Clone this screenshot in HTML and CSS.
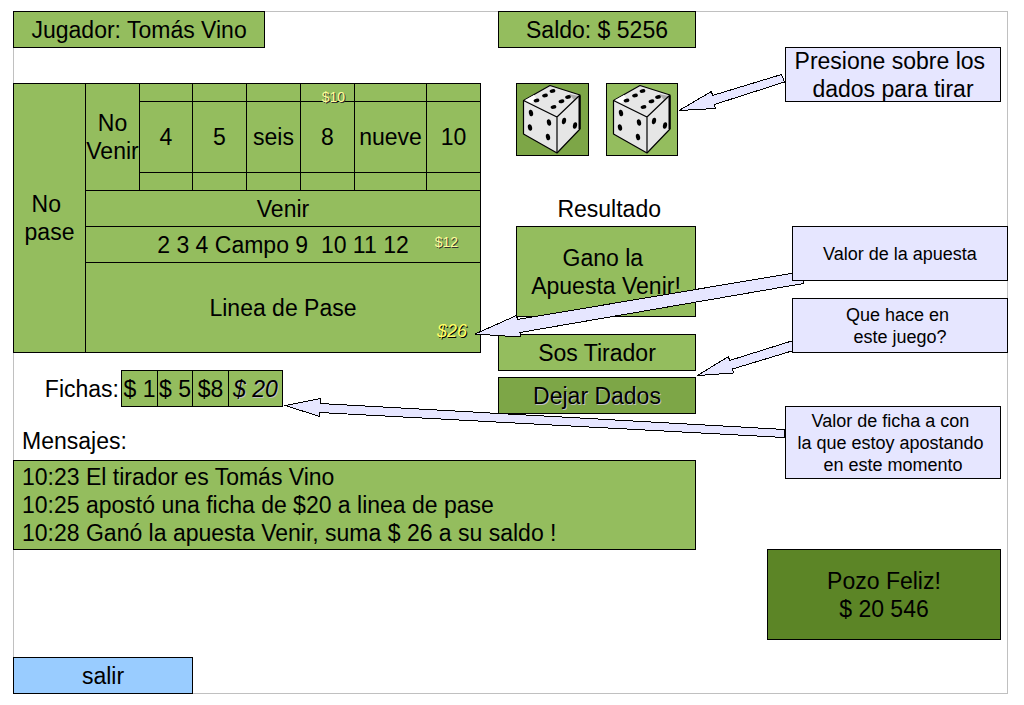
FILE: index.html
```html
<!DOCTYPE html>
<html lang="es">
<head>
<meta charset="utf-8">
<meta name="viewport" content="width=device-width, initial-scale=1">
<title>Mesa de dados</title>
<link rel="stylesheet" href="styles.css">
</head>
<body>
<svg class="defs" aria-hidden="true">
  <symbol id="die" viewBox="0 0 70 71">
    <path fill="#e6e6e6" stroke="#000" stroke-width="1.2" stroke-linejoin="round" d="M33 1.5 6.500 16.500V50L40 69 63 45V11Z"/>
    <path fill="#fff" d="M8 16 17 11 20 16 14 19Z"/>
    <path fill="#aaa" d="M62 12 52 10 57 16Z"/>
    <path fill="none" stroke="#000" stroke-width="1.2" d="M6.500 16.500 40 33 63 11M40 33V69"/>
    <path fill="none" stroke="#000" stroke-width="2" d="M62.500 12V45"/>
    <g>
      <ellipse cx="35.500" cy="7" rx="2.900" ry="1.900" transform="rotate(-12 35.500 7)"/>
      <ellipse cx="28" cy="11.500" rx="2.900" ry="1.900" transform="rotate(-12 28 11.500)"/>
      <ellipse cx="19.500" cy="16.500" rx="2.900" ry="1.900" transform="rotate(-12 19.500 16.500)"/>
      <ellipse cx="51" cy="13" rx="2.900" ry="1.900" transform="rotate(-12 51 13)"/>
      <ellipse cx="44.500" cy="17.300" rx="2.900" ry="1.900" transform="rotate(-12 44.500 17.300)"/>
      <ellipse cx="36.500" cy="23" rx="2.900" ry="1.900" transform="rotate(-12 36.500 23)"/>
    </g>
    <g>
      <ellipse cx="14" cy="29" rx="2.100" ry="3.200" transform="rotate(-12 14 29)"/>
      <ellipse cx="13" cy="43.500" rx="2.100" ry="3.200" transform="rotate(-12 13 43.500)"/>
      <ellipse cx="32" cy="38.500" rx="2.100" ry="3.200" transform="rotate(-12 32 38.500)"/>
      <ellipse cx="31" cy="53" rx="2.100" ry="3.200" transform="rotate(-12 31 53)"/>
      <ellipse cx="47" cy="37" rx="2.100" ry="3.200" transform="rotate(10 47 37)"/>
      <ellipse cx="58" cy="41.500" rx="2.100" ry="3.200" transform="rotate(10 58 41.500)"/>
    </g>
  </symbol>
</svg>

<div class="frame">
  <main class="game">
    <header class="top">
      <div class="box player">Jugador: Tomás Vino</div>
      <div class="box balance">Saldo: $ 5256</div>
    </header>

    <div class="table-area">
      <section class="left">
        <div class="board">
          <div class="cell no-pase">No 
pase</div>
          <div class="cell no-venir">No
Venir</div>
          <div class="cell"></div><div class="cell"></div><div class="cell"></div>
          <div class="cell bet-holder"><span class="bet bet-ten">$10</span></div>
          <div class="cell"></div><div class="cell"></div>
          <div class="cell">4</div><div class="cell">5</div><div class="cell">seis</div>
          <div class="cell">8</div><div class="cell">nueve</div><div class="cell">10</div>
          <div class="cell"></div><div class="cell"></div><div class="cell"></div>
          <div class="cell"></div><div class="cell"></div><div class="cell"></div>
          <div class="cell wide">Venir</div>
          <div class="cell wide bet-holder">2 3 4 Campo 9  10 11 12<span class="bet bet-field">$12</span></div>
          <div class="cell wide bet-holder">Linea de Pase<span class="bet bet-pass">$26</span></div>
        </div>
        <div class="chips">
          <span class="chips-label" id="fichas">Fichas:</span>
          <div class="chip-row" role="group" aria-labelledby="fichas">
            <button class="chip" type="button">$ 1</button>
            <button class="chip" type="button">$ 5</button>
            <button class="chip" type="button">$8</button>
            <button class="chip chip-active" type="button" aria-pressed="true">$ 20</button>
          </div>
        </div>
        <h2 class="messages-title">Mensajes:</h2>
      </section>

      <section class="right">
        <div class="dice">
          <button class="box die die-dark" type="button" aria-label="Tirar dado 1"><svg class="die-art"><use href="#die"/></svg></button>
          <button class="box die" type="button" aria-label="Tirar dado 2"><svg class="die-art"><use href="#die"/></svg></button>
        </div>
        <h2 class="result-title"> Resultado</h2>
        <div class="box result">Gano la 
Apuesta Venir!</div>
        <div class="box role">Sos Tirador</div>
        <button class="box leave" type="button">Dejar Dados</button>
      </section>
    </div>

    <div class="box messages">10:23 El tirador es Tomás Vino
10:25 apostó una ficha de $20 a linea de pase
10:28 Ganó la apuesta Venir, suma $ 26 a su saldo !</div>

    <button class="box exit" type="button">salir</button>
  </main>

  <svg class="arrows" viewBox="13 11 995 683" preserveAspectRatio="none" aria-hidden="true">
    <path d="M679 110.500 711.500 91.500 712.500 95.500 781.500 74.500 784.500 82 714.500 104.500 715.500 108.500Z"/>
    <path d="M475 334 516.500 315.500 517.500 319.500 802.500 271.500 803.500 283.500 520 332.500 520.500 337Z"/>
    <path d="M697.500 375.500 728.500 356.500 729.500 360.500 796.500 339.500 798.500 349 732.500 369 733.500 373Z"/>
    <path d="M285.500 405.500 320.500 398.500 320.500 403.500 785 429.500 784.500 437.500 319.500 412.500 319.500 416.500Z"/>
  </svg>

  <aside class="notes">
    <p class="note note-dice">Presione sobre los 
dados para tirar</p>
    <p class="note small note-bet">Valor de la apuesta</p>
    <p class="note small note-role">Que hace en 
este juego?</p>
    <p class="note small note-chip">Valor de ficha a con 
la que estoy apostando 
en este momento</p>
    <div class="box pot">Pozo Feliz!
$ 20 546</div>
  </aside>
</div>
</body>
</html>
```
FILE: styles.css
```css
* {
  box-sizing: border-box;
}

body {
  margin: 11px 16px 11px 13px;
  background: #fff;
  color: #000;
  font: 23px/28px "Liberation Sans", Arial, sans-serif;
}

h2,
p {
  margin: 0;
  font-size: inherit;
  font-weight: normal;
}

button {
  padding: 0;
  color: inherit;
  font: inherit;
  cursor: pointer;
}

.defs {
  position: absolute;
  width: 0;
  height: 0;
}

.frame {
  position: relative;
  display: grid;
  grid-template-columns: minmax(0, 683fr) minmax(0, 312fr);
  min-height: calc(100vh - 22px);
  box-shadow: inset 0 0 0 1px #c0c0c0;
}

.game {
  display: flex;
  flex-direction: column;
}

.box {
  display: flex;
  align-items: center;
  justify-content: center;
  min-height: 37px;
  border: 1px solid #000;
  background: #94bd5e;
  text-align: center;
  white-space: pre;
}

.top,
.table-area {
  display: grid;
  grid-template-columns: minmax(0, 485fr) minmax(0, 198fr);
}

.player {
  width: 52%;
}

.table-area {
  margin-top: 35px;
}

.left {
  padding-right: 17px;
}

.board {
  display: grid;
  grid-template-columns: 71fr 53fr 52fr 53fr 53fr 53fr 71fr 53fr;
  grid-template-rows: 17px minmax(70px, auto) 17px 35px 35px 89px;
  gap: 1px;
  padding: 1px;
  background: #000;
}

.cell {
  display: flex;
  align-items: center;
  justify-content: center;
  min-width: 0;
  background: #94bd5e;
  text-align: center;
  white-space: pre;
}

.no-pase {
  grid-row: 1 / 7;
}

.no-venir {
  grid-row: 1 / 4;
}

.wide {
  grid-column: 2 / 9;
}

.bet-holder {
  position: relative;
}

.bet {
  position: absolute;
  color: #ffff99;
  font-size: 14px;
  line-height: 16px;
  text-shadow: 1px 1px #333;
}

.bet-ten {
  right: 9px;
  top: 5px;
}

.bet-field {
  right: 22px;
  top: 7px;
}

.bet-pass {
  right: 13px;
  bottom: 13px;
  color: #ffff66;
  font-size: 18px;
  font-style: italic;
  text-shadow: 1px 1px #000;
}

.chips {
  display: flex;
  align-items: center;
  margin-top: 17px;
}

.chips-label {
  width: 108px;
  padding-right: 2px;
  text-align: right;
}

.chip-row {
  display: grid;
  grid-template-columns: 35px 34px 35px 53px;
  gap: 1px;
  padding: 1px;
  background: #000;
}

.chip {
  height: 35px;
  border: 0;
  background: #94bd5e;
  white-space: nowrap;
}

.chip-active {
  font-style: italic;
  text-shadow: 1px 1px #c0c0c0;
}

.messages-title {
  margin-top: 20px;
  padding-left: 9px;
}

.dice {
  display: grid;
  grid-template-columns: 1fr 1fr;
  gap: 17px;
  padding: 0 18px;
}

.die {
  height: 73px;
}

.die-dark,
.leave {
  background: #7da647;
}

.die-art {
  width: 70px;
  height: 71px;
}

.result-title {
  margin: 39px 0 3px 18px;
  text-align: center;
  white-space: pre;
}

.result {
  min-height: 91px;
  margin-left: 18px;
}

.role {
  margin-top: 17px;
}

.leave {
  width: 100%;
  margin-top: 6px;
  text-shadow: 1px 1px #c0c0c0;
}

.messages {
  justify-content: flex-start;
  margin-top: 5px;
  padding: 2px 8px;
  text-align: left;
}

.exit {
  width: 180px;
  margin-top: auto;
  background: #99ccff;
}

.arrows {
  position: absolute;
  inset: 0;
  width: 100%;
  height: 100%;
  fill: #e6e6ff;
  stroke: #000;
  shape-rendering: crispEdges;
  pointer-events: none;
}

.arrows path {
  vector-effect: non-scaling-stroke;
}

.notes {
  position: relative;
  display: flex;
  flex-direction: column;
  align-items: flex-end;
  padding-top: 36px;
}

.note {
  display: flex;
  align-items: center;
  justify-content: center;
  width: 69.23%;
  min-height: 55px;
  border: 1px solid #000;
  background: #e6e6ff;
  text-align: center;
  white-space: pre;
}

.small {
  font-size: 18px;
  line-height: 22px;
}

.note-dice,
.note-chip,
.pot {
  margin-right: 7px;
}

.note-dice {
  height: 55px;
}

.note-bet {
  margin-top: 124px;
}

.note-role {
  margin-top: 17px;
}

.note-chip {
  min-height: 73px;
  margin-top: 53px;
}

.pot {
  width: 75%;
  min-height: 91px;
  margin-top: 70px;
  background: #5c8526;
}
```
